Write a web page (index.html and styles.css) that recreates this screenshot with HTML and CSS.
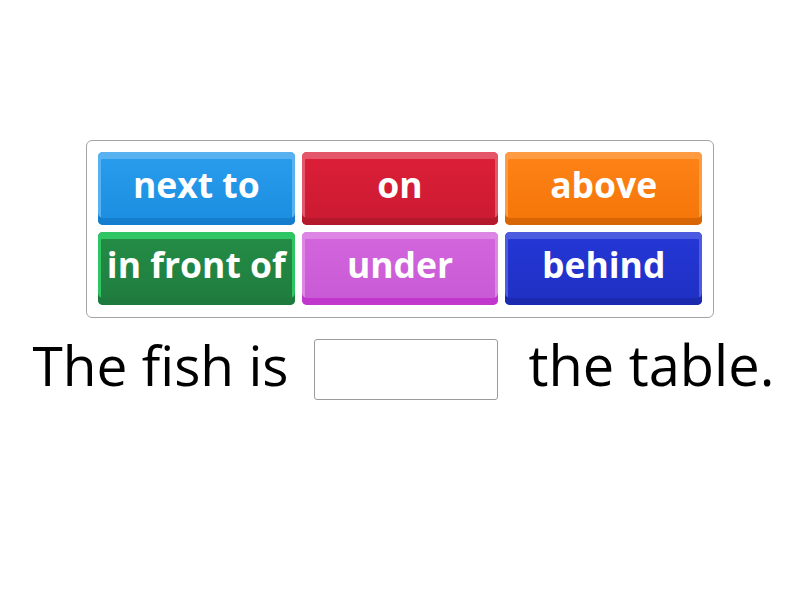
FILE: index.html
```html
<!DOCTYPE html>
<html>
<head>
    <link rel="stylesheet" href="styles.css">
</head>
<body>
    <div class="page">
        <div class="word-bank">
            <div class="tile blue">next to</div>
            <div class="tile red">on</div>
            <div class="tile orange">above</div>
            <div class="tile green">in front of</div>
            <div class="tile purple">under</div>
            <div class="tile navy">behind</div>
        </div>
        <div class="sentence">
            <span class="words">The fish is</span>
            <span class="blank"></span>
            <span class="words">the table.</span>
        </div>
    </div>
</body>
</html>
```

FILE: styles.css
```css
body {
    margin: 0;
    background-color: white;
    font-family: 'Open Sans', 'DejaVu Sans', sans-serif;
}
.page {
    padding-top: 140px;
    display: flex;
    flex-direction: column;
    align-items: center;
}
.word-bank {
    width: 604px;
    padding: 11px 11px 12px 11px;
    border: 1px solid #a3a3a3;
    border-radius: 6px;
    display: grid;
    grid-template-columns: repeat(3, 1fr);
    gap: 7px;
}
.tile {
    height: 73px;
    border-radius: 5px;
    display: flex;
    align-items: center;
    justify-content: center;
    padding-bottom: 9px;
    box-sizing: border-box;
    color: white;
    font-size: 35.5px;
    font-weight: 700;
    white-space: nowrap;
    box-shadow: inset 0 -7px 0 var(--dark), inset 0 7px 0 var(--rim), inset 3px 0 0 var(--rim), inset -3px 0 0 var(--rim);
    background: linear-gradient(var(--face), var(--face2));
}
.blue {
    --rim: #58b2ef;
    --face: #2a9ded;
    --face2: #1a8de0;
    --dark: #157dcd;
}
.red {
    --rim: #e4576b;
    --face: #de1f39;
    --face2: #c91a31;
    --dark: #b3182b;
}
.orange {
    --rim: #ff9b42;
    --face: #ff8318;
    --face2: #f47508;
    --dark: #d96605;
}
.green {
    --rim: #2fc464;
    --face: #248d46;
    --face2: #1f7c3e;
    --dark: #1f7a3d;
}
.purple {
    --rim: #dd86e5;
    --face: #d366dd;
    --face2: #c859d5;
    --dark: #c136cd;
}
.navy {
    --rim: #4b5ce0;
    --face: #2537d6;
    --face2: #1f30c3;
    --dark: #1b2aae;
}
.sentence {
    margin-top: 8px;
    padding-left: 7px;
    display: flex;
    align-items: center;
    gap: 26px;
    font-size: 55px;
    color: black;
}
.words {
    margin-bottom: 10px;
    white-space: nowrap;
}
.words + .blank + .words {
    font-size: 56px;
}
.blank {
    width: 182px;
    height: 59px;
    border: 1px solid #9a9a9a;
    border-radius: 3px;
    margin-right: 4px;
}
```
